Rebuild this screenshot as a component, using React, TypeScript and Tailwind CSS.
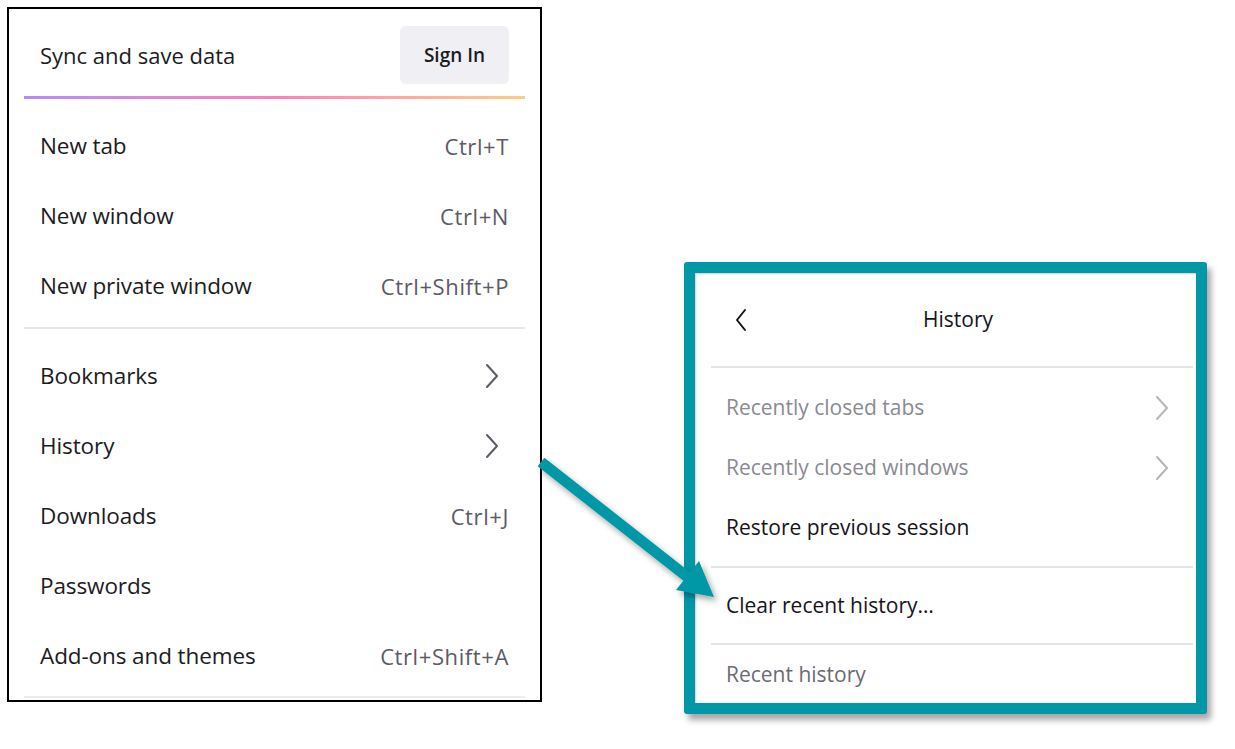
import React from "react";

type Item = { label: string; shortcut?: string; sub?: boolean };

const topItems: Item[] = [
  { label: "New tab", shortcut: "Ctrl+T" },
  { label: "New window", shortcut: "Ctrl+N" },
  { label: "New private window", shortcut: "Ctrl+Shift+P" },
];

const bottomItems: Item[] = [
  { label: "Bookmarks", sub: true },
  { label: "History", sub: true },
  { label: "Downloads", shortcut: "Ctrl+J" },
  { label: "Passwords" },
  { label: "Add-ons and themes", shortcut: "Ctrl+Shift+A" },
];

function Chevron({ className }: { className?: string }) {
  return (
    <svg width="14" height="26" viewBox="0 0 14 26" fill="none" className={className}>
      <path d="M2 2 L12 13 L2 24" stroke="currentColor" strokeWidth="2" strokeLinecap="round" strokeLinejoin="round" />
    </svg>
  );
}

function MenuRow({ item }: { item: Item }) {
  return (
    <div className="flex h-[70px] items-center justify-between pl-4 pr-4">
      <span className="text-[22.5px] tracking-[-0.1px] text-[#1c1b22]">{item.label}</span>
      {item.shortcut && <span className="text-[22px] tracking-[0.6px] text-[#5b5b66]">{item.shortcut}</span>}
      {item.sub && <Chevron className="mr-[10px] text-[#5b5b66]" />}
    </div>
  );
}

function MainMenu() {
  return (
    <div className="flex w-[535px] shrink-0 flex-col border-2 border-black bg-white px-[15px] pb-[2px]">
      {/* entête */}
      <div className="flex items-center justify-between pl-4 pr-4 pt-[17px] pb-[12px]">
        <span className="text-[22px] font-medium text-[#1c1b22]">Sync and save data</span>
        <button className="flex h-[58px] w-[109px] items-center justify-center rounded-md bg-[#f0f0f4] text-[19px] font-semibold text-[#1c1b22]">
          Sign In
        </button>
      </div>
      <div className="h-[3px] bg-gradient-to-r from-[#b38bff] via-[#ff7eb8] to-[#ffcb80]" />

      <div className="mt-3">
        {topItems.map((it) => (
          <MenuRow key={it.label} item={it} />
        ))}
      </div>
      <div className="mt-[6px] h-[2px] bg-[#e6e6ea]" />
      <div className="mt-3">
        {bottomItems.map((it) => (
          <MenuRow key={it.label} item={it} />
        ))}
      </div>
      <div className="mt-[5px] h-[2px] bg-[#ececf0]" />
    </div>
  );
}

function HistoryRow({ label, tone, sub }: { label: string; tone: "muted" | "dark" | "gray"; sub?: boolean }) {
  const color = tone === "dark" ? "text-[#15141a]" : tone === "muted" ? "text-[#8a8a93]" : "text-[#6b6b72]";
  return (
    <div className="flex h-[60px] shrink-0 items-center justify-between pl-[15px] pr-[24px]">
      <span className={`text-[21px] ${color}`}>{label}</span>
      {sub && <Chevron className="text-[#b5b5bb]" />}
    </div>
  );
}

function HistoryPanel() {
  return (
    <div className="ml-[142px] mt-[255px] h-[452px] w-[523px] shrink-0 rounded-[3px] bg-[#0097a7] p-[11px] shadow-[4px_6px_6px_rgba(0,0,0,0.35)]">
      <div className="flex h-full flex-col overflow-hidden bg-white pl-4 pr-[3px] shadow-[inset_1px_1px_2px_rgba(0,0,0,0.2)]">
        <div className="flex h-[93px] shrink-0 items-center">
          <div className="flex w-[36px] justify-end">
            <svg width="12" height="24" viewBox="0 0 12 24" fill="none" className="text-[#15141a]">
              <path d="M10 2 L2 12 L10 22" stroke="currentColor" strokeWidth="2" strokeLinecap="round" strokeLinejoin="round" />
            </svg>
          </div>
          <div className="flex-1 pr-[24px] text-center text-[21px] font-medium text-[#15141a]">History</div>
        </div>
        <div className="h-[2px] shrink-0 bg-[#e4e4e8]" />
        <div className="pt-[10px]">
          <HistoryRow label="Recently closed tabs" tone="muted" sub />
          <HistoryRow label="Recently closed windows" tone="muted" sub />
          <HistoryRow label="Restore previous session" tone="dark" />
        </div>
        <div className="mt-2 h-[2px] shrink-0 bg-[#e4e4e8]" />
        <div className="mt-2">
          <HistoryRow label="Clear recent history…" tone="dark" />
        </div>
        <div className="mt-[7px] h-[2px] shrink-0 bg-[#e4e4e8]" />
        <HistoryRow label="Recent history" tone="gray" />
      </div>
    </div>
  );
}

export default function App() {
  return (
    <div className="relative h-[749px] w-[1235px] overflow-hidden bg-white font-['Open_Sans',sans-serif]">
      <div className="flex items-start pl-[7px] pt-[7px]">
        <MainMenu />
        <HistoryPanel />
      </div>

      {/* flèche */}
      <svg className="pointer-events-none absolute left-0 top-0" width="1235" height="749">
        <defs>
          <filter id="ombre" x="-20%" y="-20%" width="140%" height="140%">
            <feDropShadow dx="3" dy="4" stdDeviation="3" floodColor="#000" floodOpacity="0.35" />
          </filter>
        </defs>
        <g filter="url(#ombre)" fill="#0097a7">
          <line x1="541" y1="462" x2="690" y2="579" stroke="#0097a7" strokeWidth="11" />
          <polygon points="714,597 676,590 699,561" />
        </g>
      </svg>
    </div>
  );
}
